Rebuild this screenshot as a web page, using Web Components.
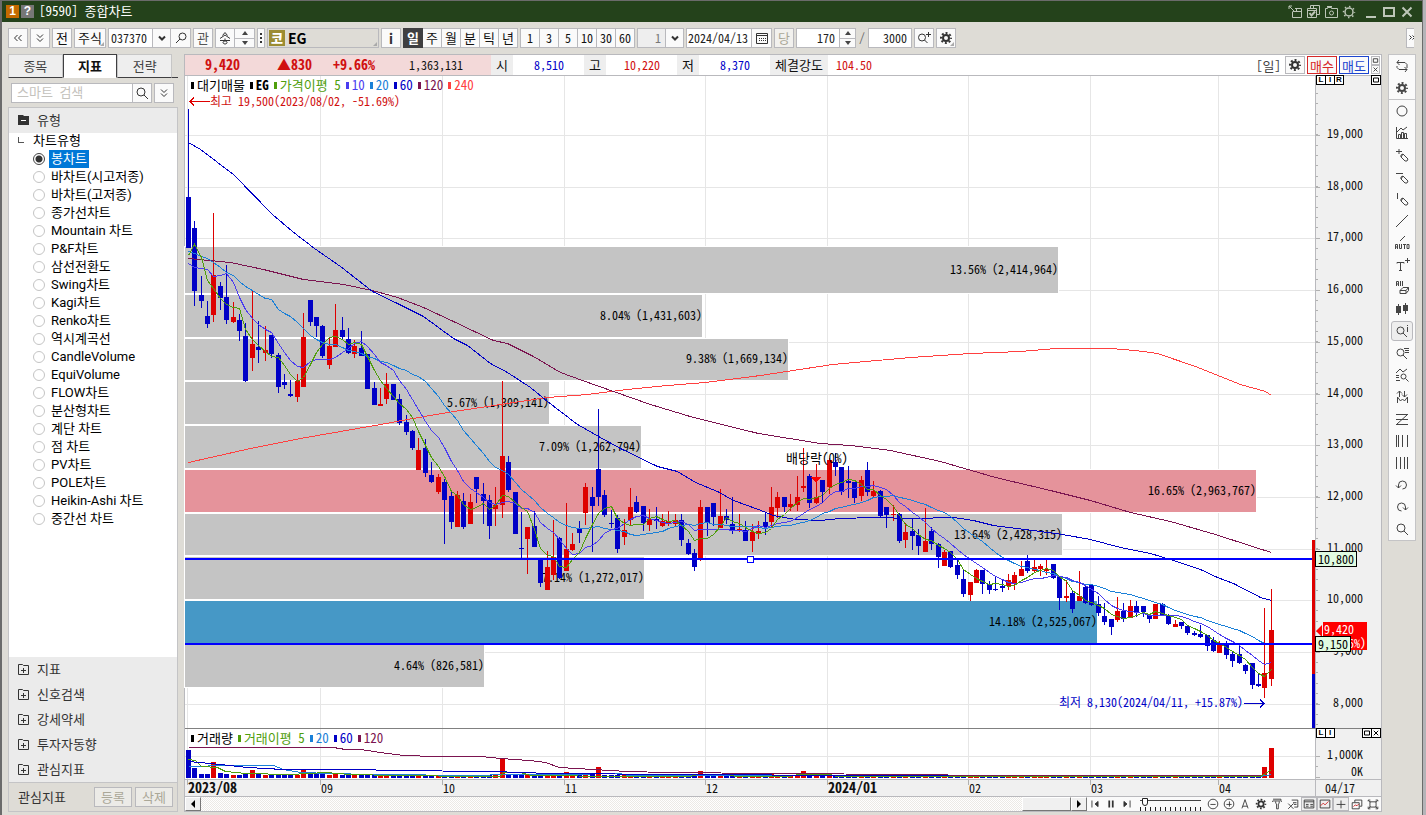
<!DOCTYPE html>
<html lang="ko">
<head>
<meta charset="utf-8">
<title>[9590] 종합차트</title>
<style>
html,body{margin:0;height:100%}
body{font:12px/16px "Noto Sans CJK KR","Liberation Sans",sans-serif;font-feature-settings:"hwid";color:#111;background:#dedcd6}
</style>
</head>
<body>
<chart-window></chart-window>
<script>
const BASE = `
:host,*{box-sizing:border-box}
button,input,select{font:inherit;font-feature-settings:inherit;color:inherit;margin:0;padding:0;border-radius:0;outline:0}
button{display:flex;align-items:center;justify-content:center;background:#fafafa;border:1px solid #b9b9bd;white-space:nowrap}
`;
function define(name, css, html, setup) {
  const tpl = document.createElement('template');
  tpl.innerHTML = `<style>${BASE}${css}</style>${html}`;
  customElements.define(name, class extends HTMLElement {
    constructor() {
      super();
      this.attachShadow({mode: 'open'}).append(tpl.content.cloneNode(true));
    }
    connectedCallback() { if (setup && !this.ready) { this.ready = true; setup.call(this, this.shadowRoot); } }
  });
}

/* ---------- icons, all on a 16 x 16 grid ---------- */
const GEAR = '<circle cx="8" cy="8" r="3" stroke-width="2"/><circle cx="8" cy="8" r="5" stroke-width="2" stroke-dasharray="1.96 1.96" stroke-dashoffset="1"/>';
const LENS = '<circle cx="6.5" cy="7.500" r="3.500"/><path d="M9 10l4 4"/>';
const PEN = '<path d="M7 8l2-1 5 5-1 2-2 0-4-4zM9 7l-2 3"/>';
const ICONS = {
  dleft: '<path d="M7.500 5L4.500 8l3 3M11.500 5l-3 3 3 3"/>',
  dright: '<path d="M2.500 5.500l2 2-2 2M5.500 5.500l2 2-2 2"/>',
  ddown: '<path d="M5 4.500l3 3 3-3M5 8.500l3 3 3-3"/>',
  down: '<path d="M5 6.500l3 3 3-3" stroke-width="2"/>',
  search: '<circle cx="7" cy="7" r="4"/><path d="M10 10l4 4"/>',
  lensl: '<circle cx="9.500" cy="6.500" r="3.500"/><path d="M7 9l-4 4"/>',
  song: '<path d="M5.500 5.500L8 2.500l2.500 3M3 8.500L8 5l5 3.500M8 8.500v2M3 10.500h10M8 11a2 1.500 0 1 0 .1 0"/>',
  dots: '<path d="M7 3h2v2H7zM7 7h2v2H7zM7 11h2v2H7z" fill="currentColor" stroke="none"/>',
  cal: '<path d="M2.500 3.500h11v10h-11zM2.500 5.500h11" /><path d="M5 8.500h7M5 10.500h7" stroke-dasharray="1 1"/>',
  lensplus: '<circle cx="6" cy="7.500" r="3.500"/><path d="M8.500 10l3 3M10 4.500h5M12.500 2v5"/>',
  gear: GEAR,
  gearo: '<circle cx="8" cy="8" r="4" stroke-width="1.500"/><circle cx="8" cy="8" r="5.500" stroke-width="1.500" stroke-dasharray="1.500 2.820" stroke-dashoffset=".7"/>',
  folderplus: '<path d="M2.500 3.500h4l1 1h5v9h-10zM5 9.500h5M7.500 7v5"/>',
  folder: '<path d="M2 3h5l1 1h5v9H2z" fill="currentColor" stroke="none"/><path d="M5 8.500h5" stroke="#fff"/>',
  popout: '<path d="M8 4.500h6.500v9h-9V8M5.500 7.500h9M9.500 4v3M2 2l5 5M2 5V2h3" />',
  multi: '<path d="M5.500 4V1.500h9v9H12M2.500 4.500h9v9h-9zM2.500 6.500h9M8.500 2v2"/><path d="M4.500 9l2 2.500 3.500-4" stroke-width="2"/>',
  camera: '<path d="M2.500 4.500h2v-1h4v1h6v9h-12z"/><circle cx="8.500" cy="9" r="2"/><path d="M4 2.500h5"/>',
  refresh: '<path d="M5 2L3 4.500 5.500 7M3 4.500h8l2 2V10M11 14l2-2.500L10.500 9M13 11.500H5l-2-2V8"/>',
  circle: '<circle cx="8" cy="8" r="5"/>',
  stats: '<path d="M2.500 2v11.500H14M4.500 13V9.500h2V13M7.500 13V7.500h2V13M10.500 13V8.500h2V13M3 7l4-4 2 2 4-3"/>',
  penplus: '<path d="M2 4.500h6M5 2v5"/>' + PEN,
  penminus: '<path d="M2 4.500h7"/>' + PEN,
  penbar: '<path d="M3.500 2v6"/>' + PEN,
  slash: '<path d="M2 14L14 2"/>',
  auto: '<path d="M6 6l5-5M1.500 14V9.500h2V14M1.500 12h2M5.500 9v4.500h2V9M9 9.500h3M10.500 9.500V14M13 9.500h2v4h-2z" />',
  textplus: '<path d="M3 6.500V5.500h7v1M6.500 5.500v8M5 13.500h3M11 3.500h5M13.500 1v5"/>',
  all: '<path d="M2.500 7V2.500h2V7M2.500 5h2M6.500 2v5M8.500 2v5M6 11.500l3-3h5.500v3l-2.500 3H6zM6 11.500h6v3M12 11.500l2.500-3"/>',
  candles: '<path d="M2 5h5v7H2zM9 4h5v6H9z" fill="currentColor" stroke="none"/><path d="M4.500 3v11M11.500 2v11"/>',
  lensi: LENS + '<path d="M13.500 2v1M13.500 4v5"/>',
  lenslist: LENS + '<path d="M10 3.500h5M11 5.500h4M11 7.500h4"/>',
  lenschart: '<path d="M2 6l4-4 3 3 4-3M2 8.500h3M2 10.500h3M2 13.500h4"/><circle cx="9.500" cy="9.500" r="2.500"/><path d="M11.500 11.500l3 3"/>',
  updown: '<path d="M5.500 8V2M3 4.500L5.500 2 8 4.500M10.500 2v6M8 5.500L10.500 8 13 5.500M3.500 14V8l3 4 2-2 2 2 3-4v6"/>',
  zed: '<path d="M2 3.500h12M2 8.500h12M2 13.500h12M13 4L3 13"/>',
  bars1: '<path d="M2.500 2v12M4.500 2v12M8.500 2v12M13.500 2v12"/>',
  bars2: '<path d="M2.500 2v12M6.500 2v12M10.500 2v12M13.500 2v12"/>',
  undo: '<path d="M4.500 11V8a4 4 0 1 1 4 4M2 8.500l2.500 2.500L7 8.500" />',
  redo: '<path d="M11.500 11V8a4 4 0 1 0-4 4M9 8.500l2.500 2.500L14 8.500" />',
  first: '<path d="M4.500 4v8"/><path d="M11.500 5v6L8 8z" fill="currentColor"/>',
  pause: '<path d="M6 4v8M10 4v8" stroke-width="2"/>',
  last: '<path d="M11.500 4v8"/><path d="M4.500 5v6L8 8z" fill="currentColor"/>',
  zoomout: '<circle cx="8" cy="8" r="5.500"/><path d="M5 8.500h6"/>',
  zoomin: '<circle cx="8" cy="8" r="5.500"/><path d="M5 8.500h6M8.500 5v6"/>',
  lettera: '<path d="M4.500 13L8 3l3.500 10M5.500 10.500h5"/>',
  tool: '<path d="M3.500 2.500h9v2l1 1M3.500 4.500l-1 1M3 4.500h9M6.500 5v2l1 1v5.500h2V8l1-1V5"/>',
  excel: '<path d="M6.500 3.500h7v8h-4M8 6.500h4M9 8.500h3M2.500 7.500l6 6M8.500 7.500l-6 6" />',
  table: '<path d="M2.500 3.500h11v9h-11zM2.500 5.500h11M4.500 8.500h3M4.500 10.500h3M9.500 8.500h3M9.500 10.500h3"/>',
  minichart: '<path d="M2.500 3.500h11v9h-11z"/><path d="M3 10l3-3 2 2 4-4" stroke="#c22"/>',
  plus: '<path d="M3 8.500h10M8 4v9"/>',
  windows: '<path d="M5.500 6V3.500h8v7H11M2.500 6.500h8v7h-8z"/><path d="M4 11l2-2 2 1 2-2" stroke="#c22"/>',
  fit: '<path d="M2.500 5V3.500H5M11 3.500h2.500V5M13.500 11v2.500H11M5 13.500H2.500V11M4.500 5.500h7v6h-7zM3 4l2 2M13 4l-2 2M3 13l2-2M13 13l-2-2"/>',
  min: '<path d="M3 13h10" stroke-width="2"/>',
  max: '<path d="M3 4h10v8H3z" stroke-width="2"/>',
  close: '<path d="M3.500 3.500l9 9M12.500 3.500l-9 9" stroke-width="2"/>'
};
customElements.define('ui-icon', class extends HTMLElement {
  constructor() { super(); this.attachShadow({mode: 'open'}); }
  connectedCallback() {
    this.shadowRoot.innerHTML = `<style>:host{display:block;width:16px;height:16px;flex:none}svg{display:block;width:100%;height:100%}</style>
      <svg viewBox="0 0 16 16" fill="none" stroke="currentColor" aria-hidden="true">${ICONS[this.getAttribute('name')] || ''}</svg>`;
  }
});

define('ui-spin', `
:host{display:flex;flex-direction:column;width:16px;border:1px solid #b9b9bd;border-left:0;background:#fafafa}
button{flex:1;border:0;background:none;width:100%;min-height:0}
button+button{border-top:1px solid #b9b9bd}
i{border:3px solid transparent;border-top:0;border-bottom:4px solid #444}
button+button i{border-bottom:0;border-top:4px solid #444}
`, `<button aria-label="위"><i></i></button><button aria-label="아래"><i></i></button>`);

/* ---------- title bar ---------- */
define('title-bar', `
:host{display:flex;align-items:center;height:21px;flex:none;background:#24421b;color:#fff;padding:0 6px 0 4px}
.b{width:13px;height:13px;margin-right:2px;font:bold 12px/13px "Liberation Sans",sans-serif;text-align:center;background:#c56a00}
.q{background:#777}
h1{font-size:13px;font-weight:400;line-height:18px;height:20px;margin:0 auto 0 3px}
button{background:none;border:0;color:#bdc6b8;width:18px;height:18px}
`, `<span class="b">1</span><span class="b q">?</span><h1>[9590] 종합차트</h1>
<button aria-label="분리"><ui-icon name="popout"></ui-icon></button><button aria-label="복사"><ui-icon name="multi"></ui-icon></button>
<button aria-label="캡처"><ui-icon name="camera"></ui-icon></button><button aria-label="설정"><ui-icon name="gearo"></ui-icon></button>
<span style="width:4px"></span>
<button aria-label="최소화"><ui-icon name="min"></ui-icon></button><button aria-label="최대화"><ui-icon name="max"></ui-icon></button><button aria-label="닫기"><ui-icon name="close"></ui-icon></button>`);

/* ---------- top tool bar ---------- */
const periods = ['일', '주', '월', '분', '틱', '년'], ticks = ['1', '3', '5', '10', '30', '60'];
define('tool-bar', `
:host{display:flex;align-items:center;gap:2px;height:32px;flex:none;padding:0 8px 0 6px;color:#222}
button,.in,.g,ui-spin{height:20px}
button{width:20px;color:#333;flex:none;position:relative;padding-bottom:1px}
.k{font-size:13px;color:#111}
.g{display:flex;flex:none}
.g>*+*{border-left:0}
.in{border:1px solid #b9b9bd;background:#fff;min-width:0;flex:none;padding-bottom:2px}
.r{text-align:right;padding-right:4px}
.w{flex:1}
.seg{width:115px}.seg button{flex:1;width:auto}
.on{background:#3f3f41!important;color:#fff!important;border-color:#3f3f41!important;font-weight:700}
.c::after{content:"";position:absolute;right:1px;bottom:1px;border:2px solid #aaa;border-top-color:transparent;border-left-color:transparent}
.name{width:112px;justify-content:flex-start;background:#dedcd6;font-weight:700;font-size:14px;font-feature-settings:normal;color:#000;gap:3px}
.name b{width:16px;height:16px;line-height:15px;background:#9c8c32;color:#fff;margin-left:1px;font-size:13px}
.more{margin-left:auto;width:8px;overflow:hidden;border-right:0;justify-content:flex-start}
`, `<button aria-label="이전"><ui-icon name="dleft"></ui-icon></button><button aria-label="펼침"><ui-icon name="ddown"></ui-icon></button>
<button class="k">전</button><button class="c k" style="width:32px">주식</button>
<div class="g" style="width:83px"><input class="in w" aria-label="종목코드" value="037370" style="padding-left:2px"><button style="width:18px" aria-label="목록"><ui-icon name="down"></ui-icon></button><button aria-label="찾기"><ui-icon name="lensl"></ui-icon></button></div>
<button style="font-size:13px;color:#555">관</button>
<div class="g" style="width:40px"><button aria-label="송신"><ui-icon name="song"></ui-icon></button><ui-spin style="width:20px"></ui-spin></div>
<button style="width:8px" aria-label="더보기"><ui-icon name="dots"></ui-icon></button>
<button class="name c"><b>코</b>EG</button>
<button style="font-weight:700;font-size:14px">i</button>
<div class="g seg">${periods.map((p, i) => `<button class="k${i ? '' : ' on'}">${p}</button>`).join('')}</div>
<div class="g seg">${ticks.map(p => `<button style="color:#111">${p}</button>`).join('')}</div>
<div class="g" style="width:47px"><input class="in w r" aria-label="주기" value="1" style="background:#eee;color:#777"><button style="width:18px" aria-label="주기 목록"><ui-icon name="down"></ui-icon></button></div>
<div class="g" style="width:86px"><input class="in w" aria-label="일자" value="2024/04/13" style="padding-left:1px"><button aria-label="달력"><ui-icon name="cal"></ui-icon></button></div>
<button style="color:#aaa797;background:#f2f1ee;font-size:13px">당</button>
<div class="g" style="width:60px"><input class="in w r" aria-label="봉 개수" value="170"><ui-spin style="width:16px"></ui-spin></div>
<span style="width:8px;text-align:center;color:#666">/</span>
<input class="in r" aria-label="전체 개수" value="3000" style="width:44px">
<button aria-label="확대 찾기"><ui-icon name="lensplus"></ui-icon></button><button class="c" aria-label="설정"><ui-icon name="gear"></ui-icon></button>
<button class="more" aria-label="도구 더보기"><ui-icon name="dright"></ui-icon></button>`);

/* ---------- left panel ---------- */
const types = ['봉차트', '바차트(시고저종)', '바차트(고저종)', '종가선차트', 'Mountain 차트', 'P&amp;F차트', '삼선전환도', 'Swing차트', 'Kagi차트', 'Renko차트', '역시계곡선', 'CandleVolume', 'EquiVolume', 'FLOW차트', '분산형차트', '계단 차트', '점 차트', 'PV차트', 'POLE차트', 'Heikin-Ashi 차트', '중간선 차트'];
define('side-panel', `
:host{display:flex;flex-direction:column;font-size:13px;color:#333}
.tabs{display:flex;height:24px;border-bottom:1px solid #3f3f41;padding-right:6px}
.tabs button{flex:1;height:24px;background:#eee;border-color:#c6c6c6;border-bottom-color:#3f3f41;color:#444}
.tabs .on{background:#fff;border-color:#3f3f41;border-bottom-color:#fff;font-weight:700;color:#111}
.find{display:flex;margin:5px 4px 4px 3px;height:20px}
.find input{flex:1;min-width:0;border:1px solid #b9b9bd;border-right:0;background:#fff;padding:0 0 2px 5px}
.find input::placeholder{color:#c4c2bc}
.find button{width:20px}
.find button+button{margin-left:2px}
.box{flex:1;display:flex;flex-direction:column;border:1px solid #c4c4c6;background:#fff}
h2,.grp{display:flex;align-items:center;gap:5px;height:25px;background:#ebebeb;font-size:13px;font-weight:400;margin:0;padding:0 0 2px 7px;border:0;width:100%;justify-content:flex-start;color:#333}
fieldset{flex:1;border:0;margin:0;padding:0;min-width:0;font-family:Roboto,"Noto Sans CJK KR",sans-serif;font-feature-settings:normal;color:#000}
legend{padding:0 0 0 24px;line-height:16px;height:17px;position:relative}
legend::before{content:"";position:absolute;left:9px;top:4px;width:5px;height:5px;border:1px solid #555;border-top:0;border-right:0}
label{display:flex;align-items:center;height:18px;padding-left:24px;gap:4px;white-space:nowrap}
label span{padding:0 2px;line-height:18px;height:18px}
input[type=radio]{appearance:none;width:12px;height:12px;border:1px solid #c4c4c4;border-radius:50%;background:#fff}
input:checked{border-color:#444;background:radial-gradient(#333 0 3px,#fff 4px)}
input:checked+span{background:#0078d7;color:#fff}
.foot{display:flex;gap:3px;align-items:center;height:29px;background:#dedcd6;border-top:1px solid #c4c4c6;padding:0 4px 0 9px}
.foot span{margin-right:auto;padding-bottom:1px}
.foot button{width:38px;height:20px;background:#ecebe7;color:#aaa797}
`, `<div class="tabs"><button>종목</button><button class="on">지표</button><button>전략</button></div>
<div class="find"><input aria-label="스마트 검색" placeholder="스마트 검색"><button aria-label="검색"><ui-icon name="search"></ui-icon></button><button aria-label="펼침"><ui-icon name="ddown"></ui-icon></button></div>
<div class="box"><h2><ui-icon name="folder"></ui-icon>유형</h2>
<fieldset><legend>차트유형</legend>${types.map((t, i) => `<label><input type="radio" name="type"${i ? '' : ' checked'}><span>${t}</span></label>`).join('')}</fieldset>
${['지표', '신호검색', '강세약세', '투자자동향', '관심지표'].map(t => `<button class="grp"><ui-icon name="folderplus"></ui-icon>${t}</button>`).join('')}
<div class="foot"><span>관심지표</span><button disabled>등록</button><button disabled>삭제</button></div></div>`);

/* ---------- quote bar ---------- */
define('quote-bar', `
:host{display:flex;height:22px;flex:none;border-top:1px solid #b9b9bd;border-bottom:1px solid #b9b9bd;background:#fff;line-height:19px}
.p{display:flex;background:#f3d9d9;width:306px;color:#d01010}
.p b{font-size:14px;text-align:right}
span{text-align:right}
.h{background:#eee;color:#111;text-align:center;width:22px;font-size:13px}
.v{width:71px;padding-right:20px}
.d{color:#0000c8}.u{color:#d01010}
.e{margin-left:auto;display:flex;align-items:center;gap:2px;padding-right:1px}
button{height:18px;width:20px;color:#333}
.t{width:30px;font-size:13px}
.s{display:flex;flex-direction:column;width:9px}
.s button{width:9px;height:9px}
.s ui-icon{width:7px;height:7px}
`, `<div class="p"><b style="width:55px">9,420</b><b style="width:72px">▲830</b><b style="width:63px">+9.66%</b><span style="width:88px;color:#111">1,363,131</span></div>
<span class="h">시</span><span class="v d">8,510</span><span class="h">고</span><span class="v u" style="padding-right:17px">10,220</span><span class="h">저</span><span class="v d">8,370</span><span class="h" style="width:58px">체결강도</span><span class="u" style="padding-left:8px">104.50</span>
<div class="e"><span style="font-size:13px;color:#444;margin-right:2px">[일]</span><button aria-label="설정"><ui-icon name="gear"></ui-icon></button><button class="t" style="color:#d62828;border-color:#d62828">매수</button><button class="t" style="color:#1c45cf;border-color:#1c45cf">매도</button><div class="s"><button aria-label="최대화"><ui-icon name="max"></ui-icon></button><button aria-label="닫기"><ui-icon name="close"></ui-icon></button></div></div>`);

define('pane-keys', `
:host{display:flex;justify-content:space-between;position:absolute;left:0;right:0;top:-1px}
div{display:flex}
button{width:10px;height:10px;border-color:#000;background:#fff;color:#000;font:bold 8px/8px "Liberation Sans",sans-serif}
button+button{margin-left:-1px}
ui-icon{width:8px;height:8px}
`, `<div id="l"></div><div id="r"></div>`, function (root) {
  root.getElementById('l').innerHTML = [...this.getAttribute('left')].map(c => `<button>${c}</button>`).join('');
  root.getElementById('r').innerHTML = this.getAttribute('right').split(' ').map(c => `<button aria-label="${c}"><ui-icon name="${c}"></ui-icon></button>`).join('');
});

define('chart-legend', `
:host{position:absolute;left:6px;top:1px;display:flex;gap:5px;font-size:13px;line-height:16px;white-space:nowrap}
span{display:flex;align-items:center;gap:3px}
i{width:3px;height:7px;background:currentColor}
`, ``, function (root) {
  for (const item of this.getAttribute('items').split('|')) {
    const [text, color, weight] = item.split(';');
    const s = document.createElement('span');
    s.style.color = color; if (weight) s.style.fontWeight = weight;
    s.append(document.createElement('i'), text);
    root.append(s);
  }
});

/* ---------- data: colour, high, body top, body bottom, low ---------- */
const C = `b109,197,248,248 b221,228,291,306 b276,295,301,308 b301,316,324,328 r213,275,315,322 b282,286,298,310 b265,297,320,324 r302,317,322,323 b314,320,331,341 b323,336,381,382
r291,344,358,371 b321,347,350,363 r326,350,353,361 b335,335,354,358 b353,355,387,393 b374,382,385,389 b380,394,396,397 r374,381,397,402 r313,337,387,387 b300,300,322,326
b317,317,326,337 b325,326,356,358 r337,346,365,369 r304,330,347,347 b317,330,337,339 b328,339,353,354 r340,346,354,358 b331,348,356,356 b354,354,389,389 b382,388,405,405
r388,404,406,406 r373,384,399,404 b384,384,400,400 b394,399,423,425 b415,422,432,435 b430,431,448,450 r438,450,470,470 b439,448,473,477 b462,475,482,483 r474,477,492,494
b479,482,500,544 b490,496,522,529 r491,495,527,527 b493,501,527,529 r494,502,524,524 b477,477,489,503 b483,494,501,524 b495,500,526,539 r487,505,509,526 r381,456,505,518
b456,462,490,492 b492,492,534,534 b512,548,549,558 r527,527,539,574 b511,526,547,547 b559,560,583,587 r551,567,590,590 r520,557,575,580 b537,538,578,579 r503,549,571,571
r533,544,550,551 b521,528,533,543 r483,487,513,525 b487,497,506,552 b409,469,497,506 b490,495,515,517 b510,523,524,528 b515,518,549,553 r519,530,537,545 r488,507,520,526
b496,502,512,513 b506,506,523,531 r509,519,525,531 b507,519,521,529 r514,521,526,527 r511,521,524,526 r514,520,524,526 b514,520,540,546 b539,543,554,555 b549,553,567,571
r500,507,559,561 b507,507,523,536 b503,503,517,526 r489,516,528,528 b509,516,520,524 b497,524,531,534 r514,529,531,532 b521,530,541,541 r524,532,541,552 r521,531,534,539
b512,522,527,535 r487,507,522,527 r492,497,508,518 b497,497,507,512 r494,504,507,511 r476,497,505,511 r448,486,488,492 b474,476,503,508 r464,497,503,504 b480,480,492,503
r458,460,487,494 b453,462,467,476 b467,467,492,495 b466,481,483,498 b482,482,498,503 r476,480,496,501 b462,470,492,496 r481,491,496,497 b490,491,516,517 b507,507,515,528
r505,514,515,521 b513,514,541,543 r523,532,540,548 b519,531,536,550 b529,535,546,555 r508,541,552,552 b527,531,544,550 b543,544,557,568 r550,552,566,566 b551,551,567,568
b559,565,575,579 b570,579,594,597 r582,582,595,601 r569,570,583,583 b570,570,584,594 b581,584,590,594 b576,589,590,591 b579,586,588,592 r574,580,586,590 r572,575,583,590
r561,569,576,576 b555,561,571,573 r560,567,571,573 r564,566,569,576 r559,569,571,575 b564,564,578,579 b576,577,598,610 r580,596,598,602 b591,593,609,613 r571,596,601,601
b585,587,603,604 b585,585,605,606 b596,604,613,616 b603,616,622,625 b619,619,627,635 r597,611,620,622 b603,611,619,622 r600,606,618,618 b601,606,613,617 b606,606,612,617
b614,615,619,623 r604,604,619,619 b603,604,616,616 b614,615,624,625 r620,624,627,627 b622,622,626,629 b626,626,633,635 b631,633,635,636 b625,634,637,638 b635,635,646,651
b637,640,651,652 r641,644,653,653 b641,643,655,659 b652,654,661,667 b644,654,663,664 b664,665,671,674 b663,663,685,689 b674,684,686,687 r608,673,688,698 r589,630,679,686`
  .split(/\s+/).map(s => ({up: s[0] === 'r', v: s.slice(1).split(',').map(Number)}));
const W = 1130, X0 = 185, Y0 = 76, H = 652, VY = 729, VH = 50;
const RED = '#de0000', BLUE = '#0000c6';
const cx = i => Math.floor(188.3 + 6.408 * i) - X0;
const closes = C.map(c => c.up ? c.v[1] : c.v[2]);
const lead = {
  5: [255, 244, 257, 280],
  10: [263, 267, 268, 269, 276, 275, 273, 282, 297],
  20: [251, 253, 256, 258, 262, 267, 272, 275, 281, 286, 290, 294, 298, 299, 309, 313, 316, 322, 328]
};
const avg = n => closes.map((_, i) => [cx(i), (i < n - 1 ? lead[n][i] : closes.slice(i - n + 1, i + 1).reduce((a, b) => a + b) / n) - Y0]);
const pts = (s, oy) => s.split(' ').map(p => { const [x, y] = p.split(','); return [x - X0, y - oy]; });
const line = (p, color) => `<polyline points="${p.map(q => (q[0] + .5) + ',' + (Math.round(q[1]) + .5)).join(' ')}" stroke="${color}" fill="none"/>`;
const rect = (x, y, w, h, f) => `<rect x="${x}" y="${y}" width="${w}" height="${h}" fill="${f}"/>`;
const MONTHS = [187, 320, 442, 564, 705, 827, 968, 1090, 1218];
const PRICES = Array.from({length: 12}, (_, i) => ({y: Math.round(135 + i * 51.7), t: (19 - i) + ',000'}));
const pct = (n, of) => n / of * 100 + '%';
const svg = (h, body) => `<svg viewBox="0 0 ${W} ${h}" preserveAspectRatio="none" shape-rendering="crispEdges" aria-hidden="true">${body}</svg>`;
const PANE = `
:host{display:flex;position:relative;min-height:0}
.plot{flex:1;position:relative;background:#fff;min-width:0}
svg{position:absolute;left:0;top:0;width:100%;height:100%}
.axis{width:66px;position:relative;background:#f0f0f0;border-left:1px solid #b9b9bd}
.lab{position:absolute;right:18px;line-height:16px;margin-top:-10px}
.tick{position:absolute;left:0;height:1px;width:2px;background:#b0b0b0}
.tick.m{width:4px}
`;
const vgrid = h => MONTHS.map(x => rect(x - X0, 0, 1, h, '#e6e6e6')).join('');

define('price-chart', PANE + `
.band{position:absolute;left:0;display:flex;align-items:center;justify-content:flex-end;color:#000;outline:1px solid #fff;white-space:nowrap;padding-bottom:2px}
.note{position:absolute;white-space:nowrap;margin-top:-8px}
.tag{position:absolute;left:-1px;border:1px solid #000;background:#e1fbe1;color:#000;line-height:13px;height:16px;padding:0 2px}
.now{position:absolute;left:7px;width:44px;height:28px;background:#f00;color:#fff;line-height:14px;padding-left:1px}
.now::before{content:"";position:absolute;left:-7px;top:3px;border:6px solid transparent;border-right:6px solid #f00;border-left:0}
`, `<div class="plot"></div><div class="axis"></div>`, function (root) {
  const bands = [[247, 293, 1058, '13.56% (2,414,964)'], [295, 337, 702, '8.04% (1,431,603)'], [339, 380, 788, '9.38% (1,669,134)'], [382, 424, 549, '5.67% (1,309,141)'], [426, 468, 641, '7.09% (1,262,794)'], [470, 512, 1256, '16.65% (2,963,767)', '#e5939b'], [514, 555, 1062, '13.64% (2,428,315)'], [557, 599, 644, '7.14% (1,272,017)'], [601, 643, 1097, '14.18% (2,525,067)', '#4698c6'], [645, 687, 484, '4.64% (826,581)']];
  const grid = vgrid(H) + PRICES.map(p => rect(0, p.y - Y0, W, 1, '#e6e6e6')).join('');
  const bandHtml = bands.map(b => `<div class="band" style="top:${pct(b[0] - Y0, H)};height:${pct(b[1] - b[0], H)};width:${pct(b[2] - X0, W)};background:${b[4] || '#c4c4c4'}">${b[3]}</div>`).join('');
  const candles = C.map((c, i) => {
    const x = cx(i), [h, t, b, l] = c.v, f = c.up ? RED : BLUE;
    return rect(x, h - Y0, 1, Math.max(l - h, 1), f) + rect(x - 2, t - Y0, 5, Math.max(b - t, 1), f);
  }).join('');
  const ma = line(pts('188,462 250,448 300,438 380,424 407,419 447,412 487,406 520,401 547,397 587,394 627,389 667,385 705,382 760,375 832,364 910,357 970,353 1020,351 1055,348 1110,348 1135,350 1157,353 1195,366 1240,384 1265,391 1271,395', Y0), '#ff4040')
    + line(pts('188,258 230,262 263,269 303,279 343,284 372,290 397,297 423,307 453,321 493,340 507,343 533,356 560,372 582,380 613,391 650,404 693,417 758,433 820,443 850,445 890,450 940,461 995,477 1050,490 1090,500 1130,512 1170,521 1215,534 1255,547 1271,552', Y0), '#7b1450')
    + line(pts('188,142 200,149 233,174 272,214 292,231 314,248 340,266 372,291 397,303 423,316 453,338 467,345 490,363 507,372 530,387 547,401 577,424 598,436 620,448 657,466 677,471 695,482 717,491 733,500 758,509 773,515 795,519 820,520 840,518 873,517 913,518 953,517 973,520 993,525 1040,531 1062,534 1090,539 1120,547 1150,553 1173,560 1200,569 1217,577 1233,583 1260,597 1271,600', Y0), BLUE)
    + line(avg(20), '#1a80d8') + line(avg(10), '#4a3cf0') + line(avg(5), '#4f9e0c');
  const marks = rect(0, 482, W, 2, '#0000ff') + rect(0, 567, W, 2, '#0000ff')
    + `<rect x="562.500" y="480.500" width="6" height="6" fill="#fff" stroke="#0000ff"/>`
    + rect(1127, 464, 3, 134, RED) + rect(1127, 598, 3, 54, BLUE)
    + `<path d="M626 401h10l-5 6z" fill="#f00"/>`
    + `<path d="M5 25.500h20M9 21.500l-4 4 4 4" stroke="${RED}" fill="none"/><path d="M1059 627.500h20M1075 623.500l4 4-4 4" stroke="${BLUE}" fill="none"/>`;
  root.querySelector('.plot').innerHTML = svg(H, grid) + bandHtml + svg(H, candles + ma + marks)
    + `<span class="note" style="left:${pct(25, W)};top:${pct(25, H)};color:#d01010">최고 19,500(2023/08/02, -51.69%)</span>
       <span class="note" style="right:${pct(1315 - 1243, W)};top:${pct(702 - Y0, H)};color:${BLUE}">최저 8,130(2024/04/11, +15.87%)</span>
       <span class="note" style="left:${pct(601, W)};top:${pct(458 - Y0, H)};font-size:13px;color:#000">배당락(0%)</span>
       <chart-legend items="대기매물;#000|EG;#000;700|가격이평 5;#4f9e0c|10;#4a3cf0|20;#1a80d8|60;${BLUE}|120;#7b1450|240;#ff4040"></chart-legend>`;
  let ax = '';
  for (let y = 93; y < 725; y += 10.346) ax += `<i class="tick" style="top:${pct(Math.round(y) - Y0, H)}"></i>`;
  ax += PRICES.map(p => `<i class="tick m" style="top:${pct(p.y - Y0, H)}"></i><span class="lab" style="top:${pct(p.y - Y0, H)}">${p.t}</span>`).join('');
  ax += `<span class="tag" style="top:${pct(475, H)}">10,800</span><div class="now" style="top:${pct(546, H)}">9,420<br>(9.66%)</div><span class="tag" style="top:${pct(560, H)}">9,150</span><pane-keys left="LIR" right="max"></pane-keys>`;
  root.querySelector('.axis').innerHTML = ax;
});

define('volume-chart', PANE + ':host{border-top:1px solid #808080}', `<div class="plot"></div><div class="axis"></div>`, function (root) {
  const first = [28, 10, 4, 4, 16, 5, 4, 3, 3, 4, 8, 5, 3, 3, 4, 3, 3, 3, 8, 6, 5, 4, 3, 4];
  const big = {49: 20, 50: 3, 59: 6, 62: 5, 63: 4, 64: 11, 80: 7, 91: 4, 96: 7, 168: 11, 169: 30};
  const bars = C.map((c, i) => { const h = first[i] || big[i] || 3; return rect(cx(i) - 2, 49 - h, 5, h, c.up || i === 64 ? RED : BLUE); }).join('');
  const ma = line(pts('188,766 200,766 215,765 273,765 283,769 300,772 330,773 370,774 480,775 500,774 560,774 620,773 627,775 1260,776 1271,774', VY), '#1a80d8')
    + line(pts('188,759 195,760 201,766 217,767 225,771 245,773 290,774 325,772 350,774 395,775 480,776 500,776 503,772 520,772 530,775 625,776 690,776 697,774 728,774 735,776 790,776 797,774 830,774 836,776 1260,776 1265,773 1271,769', VY), '#4f9e0c')
    + line(pts('188,761 220,764 247,767 283,769 347,769 403,770 480,771 532,772 538,773 691,774 850,775 1260,775', VY), BLUE)
    + line(pts('188,747 333,747 345,749 360,749 380,752 403,755 436,756 480,756 500,758 529,760 545,762 559,767 627,771 666,772 774,773 913,774 981,775 1260,775', VY), '#7b1450');
  root.querySelector('.plot').innerHTML = svg(VH, vgrid(VH) + rect(0, 27, W, 1, '#e6e6e6') + bars + ma)
    + `<chart-legend items="거래량;#000|거래이평 5;#4f9e0c|20;#1a80d8|60;${BLUE}|120;#7b1450"></chart-legend>`;
  root.querySelector('.axis').innerHTML = `<i class="tick m" style="top:54%"></i><i class="tick" style="top:74%"></i><i class="tick m" style="top:96%"></i>
    <span class="lab" style="top:54%">1,000K</span><span class="lab" style="top:88%">0K</span><pane-keys left="LI" right="max close"></pane-keys>`;
});

define('time-axis', `
:host{display:flex;height:17px;flex:none;border-top:1px solid #b9b9bd;background:#f0f0f0;line-height:16px}
.t{flex:1;position:relative}
span{position:absolute;top:0;padding-left:1px;line-height:15px}
span::before{content:"";position:absolute;left:0;top:0;height:5px;width:1px;background:#b0b0b0}
b{font-size:14px}
.n{width:66px;border-left:1px solid #b9b9bd;padding-left:9px}
`, `<div class="t">${['2023/08', '09', '10', '11', '12', '2024/01', '02', '03', '04'].map((t, i) => `<span style="left:${pct(MONTHS[i] - X0, W)}">${t.length > 2 ? `<b>${t}</b>` : t}</span>`).join('')}</div><div class="n">04/17</div>`);

define('scroll-row', `
:host{display:flex;height:15px;flex:none;border-top:1px solid #b9b9bd;background:#fafafa}
button{width:16px;height:14px;border:0;background:none;color:#333;flex:none}
.track{flex:1;display:flex;justify-content:flex-end;background:repeating-conic-gradient(#fff 0 25%,#eceae6 0 50%) 0 0/2px 2px}
.thumb,.a{background:#f0f0f0;border:1px solid;border-color:#fff #777 #777 #fff}
.thumb{width:49px}
i{border:4px solid transparent;border-right:4px solid #000;border-left:0}
.a.r i{border-right:0;border-left:4px solid #000}
.on{background:#eee;border:1px solid #b9b9bd}
ui-icon{height:14px;width:14px}
.rng{width:61px;margin:0 4px 0 5px;background:repeating-linear-gradient(90deg,#222 0 1px,transparent 1px 5px) 0 100%/100% 4px no-repeat}
input{appearance:none;display:block;width:100%;height:10px;background:linear-gradient(#444,#444) 0 3px/100% 1px no-repeat}
input::-webkit-slider-thumb{appearance:none;width:6px;height:8px;border:1px solid #222;background:#fff;border-radius:0 0 3px 3px}
`, `<button class="a" aria-label="왼쪽"><i></i></button><div class="track"><div class="thumb"></div></div><button class="a r" aria-label="오른쪽"><i></i></button>
${['first', 'pause', 'last'].map(n => `<button aria-label="${n}"><ui-icon name="${n}"></ui-icon></button>`).join('')}
<div class="rng"><input type="range" aria-label="봉 폭" value="4"></div>
${['zoomout', 'zoomin', 'lettera', 'gear', 'tool', 'excel', 'table', 'minichart', 'plus', 'windows', 'fit'].map(n => `<button${/table|minichart|plus/.test(n) ? ' class="on"' : ''} aria-label="${n}"><ui-icon name="${n}"></ui-icon></button>`).join('')}`);

define('tool-rail', `
:host{display:flex;flex-direction:column;align-items:stretch;background:#fafafa;border:1px solid #c4c4c6;align-self:flex-start}
button{height:22px;border:0;background:none;color:#444}
hr{border:0;border-top:1px solid #c4c4c6;margin:0;width:100%}
.on{border:1px solid #b9b9bd;border-radius:3px;background:#eee;height:20px;margin:1px 2px}
`, ['refresh', 'gear', '-', 'circle', 'stats', 'penplus', 'penminus', 'penbar', 'slash', 'auto', 'textplus', 'all', 'candles', 'lensi', 'lenslist', 'lenschart', 'updown', 'zed', 'bars1', 'bars2', 'undo', 'redo', 'search']
  .map(n => n === '-' ? '<hr>' : `<button aria-label="${n}"${n === 'lensi' ? ' class="on"' : ''}><ui-icon name="${n}"></ui-icon></button>`).join(''));

define('chart-window', `
:host{display:flex;flex-direction:column;min-height:100vh;background:#dedcd6;border:solid #6b6b6b;border-width:1px 1px 0 2px;margin-right:3px;box-shadow:3px 0 #b4b4b8}
.body{flex:1;display:grid;grid-template-columns:170px minmax(0,1fr) 28px;gap:6px;padding:0 6px 3px}
main{display:flex;flex-direction:column;border:1px solid #b9b9bd;border-top:0;min-width:0}
price-chart{flex:1}
volume-chart{flex:0 0 51px}
`, `<title-bar></title-bar><tool-bar></tool-bar>
<div class="body"><side-panel></side-panel>
<main><quote-bar></quote-bar><price-chart></price-chart><volume-chart></volume-chart><time-axis></time-axis><scroll-row></scroll-row></main>
<tool-rail></tool-rail></div>`);
</script>
</body>
</html>
